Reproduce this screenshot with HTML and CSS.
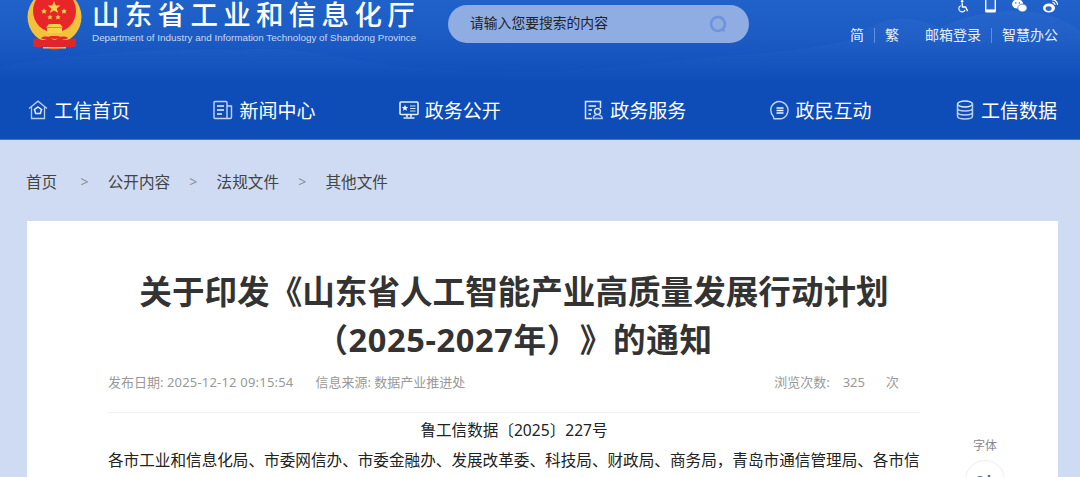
FILE: index.html
```html
<!DOCTYPE html>
<html lang="zh-CN">
<head>
  <meta charset="UTF-8" />
  <title>山东省工业和信息化厅</title>
  <link rel="stylesheet" href="styles.css">
</head>
<body>
  <!-- 页头 -->
  <header class="top">
    <svg class="top-bg" viewBox="0 0 1080 82" preserveAspectRatio="none" aria-hidden="true">
      <defs>
        <linearGradient id="hill" x1="0" y1="0" x2="0" y2="1">
          <stop offset="0" stop-color="#4b86dc" stop-opacity=".16"/>
          <stop offset="1" stop-color="#4b86dc" stop-opacity="0"/>
        </linearGradient>
      </defs>
      <path d="M0 82 L0 66 C90 52 170 48 240 50 C300 44 340 62 420 68 C520 76 600 70 680 60 C740 54 790 54 850 40 C880 20 900 10 940 28 C980 8 1040 2 1080 30 L1080 82 Z" fill="url(#hill)"/>
    </svg>
    <svg class="emblem" viewBox="0 0 56 52" aria-hidden="true">
      <circle cx="27.5" cy="17" r="27" fill="#f3c23c"/>
      <circle cx="27.5" cy="11" r="21.5" fill="#e8262a"/>
      <path d="M27 1 L28.7 5.4 L33.4 5.4 L29.7 8.4 L31.2 13 L27 10.4 L22.8 13 L24.3 8.4 L20.6 5.4 L25.3 5.4 Z" fill="#f8d34a"/>
      <path d="M17 8.5 L17.9 10.3 L19.9 10.5 L18.4 11.8 L18.9 13.8 L17 12.8 L15.1 13.8 L15.6 11.8 L14.1 10.5 L16.1 10.3 Z" fill="#f8d34a"/>
      <path d="M37 8.5 L37.9 10.3 L39.9 10.5 L38.4 11.8 L38.9 13.8 L37 12.8 L35.1 13.8 L35.6 11.8 L34.1 10.5 L36.1 10.3 Z" fill="#f8d34a"/>
      <path d="M23 14.5 L23.8 16.2 L25.6 16.4 L24.3 17.6 L24.7 19.4 L23 18.5 L21.3 19.4 L21.7 17.6 L20.4 16.4 L22.2 16.2 Z" fill="#f8d34a"/>
      <path d="M31 14.5 L31.8 16.2 L33.6 16.4 L32.3 17.6 L32.7 19.4 L31 18.5 L29.3 19.4 L29.7 17.6 L28.4 16.4 L30.2 16.2 Z" fill="#f8d34a"/>
      <path d="M22 24 H33 L36 27.5 H19 Z M20 28 H35 V33 H20 Z" fill="#f8d34a"/>
      <path d="M6 39 C11 37 15 42 20 39 C24 36 25 40 27.5 40 C30 40 31 36 35 39 C40 42 44 37 49 39 L49 46 C43 49 39 46 35 47 C32 48 30 51 27.5 50 C25 51 23 48 20 47 C16 46 12 49 6 46 Z" fill="#e0262a"/>
      <path d="M14 38 C18 35 21 38 24 36 H31 C34 38 37 35 41 38 C37 41 33 37 27.5 39 C22 37 18 41 14 38 Z" fill="#e8262a"/>
      <path d="M16 47 H39 V48.5 H16 Z" fill="#f3c23c"/>
    </svg>
    <div class="brand">
      <div class="brand-name">山东省工业和信息化厅</div>
      <div class="brand-en">Department of Industry and Information Technology of Shandong Province</div>
    </div>
    <div class="search">
      <span class="search-text">请输入您要搜索的内容</span>
      <svg class="search-icon" viewBox="0 0 20 20" aria-hidden="true">
        <circle cx="10" cy="10" r="7" fill="none" stroke="#6d93dd" stroke-width="2.6"/>
        <path d="M14 15 L16.5 17" stroke="#6d93dd" stroke-width="2.4"/>
      </svg>
    </div>
    <div class="tools">
      <div class="tool-icons">
        <svg class="ic-a" viewBox="0 0 14 14" aria-hidden="true">
          <circle cx="6" cy="1" r="1.5" fill="#fff"/>
          <path d="M6 3 L6.4 7.6 H10 L12.4 12.4" fill="none" stroke="#fff" stroke-width="1.6"/>
          <path d="M4.4 6 A3.8 3.8 0 1 0 9.4 11" fill="none" stroke="#fff" stroke-width="1.3"/>
        </svg>
        <svg class="ic-b" viewBox="0 0 11 13" aria-hidden="true">
          <rect x="0" y="-2" width="11" height="14.5" rx="1.6" fill="#fff"/>
          <rect x="1.4" y="-1" width="8.2" height="10.4" fill="#2a68cc"/>
        </svg>
        <svg class="ic-c" viewBox="0 0 15 13" aria-hidden="true">
          <ellipse cx="5.6" cy="4" rx="5.6" ry="4.6" fill="#fff"/>
          <ellipse cx="10.4" cy="8" rx="4.6" ry="3.9" fill="#fff" stroke="#2a68cc" stroke-width=".7"/>
          <circle cx="3.8" cy="3" r=".8" fill="#2a68cc"/>
          <circle cx="7.4" cy="3" r=".8" fill="#2a68cc"/>
        </svg>
        <svg class="ic-c" viewBox="0 0 15 13" aria-hidden="true">
          <ellipse cx="6" cy="8" rx="6" ry="4.6" fill="#fff"/>
          <ellipse cx="5.6" cy="8.6" rx="3" ry="2.3" fill="#2a68cc"/>
          <path d="M9 0 A5 5 0 0 1 14.6 5 M9.5 2.4 A2.4 2.4 0 0 1 12 5" fill="none" stroke="#fff" stroke-width="1.2"/>
        </svg>
      </div>
      <div class="tool-links">
        <span>简</span><i></i><span>繁</span>
        <span class="mail">邮箱登录</span><i></i><span>智慧办公</span>
      </div>
    </div>
  </header>

  <!-- 导航 -->
  <nav class="nav">
    <a class="nav-item">
      <svg viewBox="0 0 20 20" aria-hidden="true">
        <path d="M1 8.5 L10 1.2 L19 8.5 M3.5 7 V18.5 H16.5 V7" fill="none" stroke="#b9cff2" stroke-width="1.3"/>
        <path d="M10 7 L13.6 9.6 L12.3 13.6 H7.7 L6.4 9.6 Z" fill="none" stroke="#e6eefb" stroke-width="1.5"/>
      </svg>
      工信首页
    </a>
    <a class="nav-item">
      <svg viewBox="0 0 20 20" aria-hidden="true">
        <path d="M14 18.5 H2 A1 1 0 0 1 1 17.5 V2.5 A1 1 0 0 1 2 1.5 H13 A1 1 0 0 1 14 2.5 V18.5 H17 A1.5 1.5 0 0 0 18.5 17 V6 H14" fill="none" stroke="#c3d5f4" stroke-width="1.4"/>
        <path d="M4 6 H11 M4 10 H11 M4 14 H9" stroke="#eef3fc" stroke-width="1.4"/>
      </svg>
      新闻中心
    </a>
    <a class="nav-item">
      <svg viewBox="0 0 20 20" aria-hidden="true">
        <rect x="1" y="2" width="18" height="12.5" rx="1" fill="none" stroke="#e6eefb" stroke-width="1.6"/>
        <path d="M6 4.8 L6.9 7 L9.2 7.1 L7.4 8.5 L8 10.8 L6 9.5 L4 10.8 L4.6 8.5 L2.8 7.1 L5.1 7 Z" fill="#fff"/>
        <path d="M11 6 H16.5 M11 8.5 H16.5 M11 11 H16.5" stroke="#d3e0f7" stroke-width="1.1"/>
        <path d="M8 14.5 V17 M12 14.5 V17 M4.5 18 H15.5" stroke="#e6eefb" stroke-width="1.6"/>
      </svg>
      政务公开
    </a>
    <a class="nav-item">
      <svg viewBox="0 0 20 20" aria-hidden="true">
        <path d="M8 18.5 H1.5 V1.5 H16.5 V8" fill="none" stroke="#dce7f9" stroke-width="1.5"/>
        <path d="M4.5 6 H12 M4.5 10 H8 M4.5 14 H7" stroke="#eef3fc" stroke-width="1.4"/>
        <circle cx="13.5" cy="11.5" r="3" fill="none" stroke="#dce7f9" stroke-width="1.4"/>
        <path d="M9 18.5 C9.5 15.5 11 15 12.5 14.6 M18.5 18.5 C18 15.5 16 15 14.5 14.6 M9 18.5 H19" fill="none" stroke="#a9c3ee" stroke-width="1.4"/>
      </svg>
      政务服务
    </a>
    <a class="nav-item">
      <svg viewBox="0 0 20 20" aria-hidden="true">
        <path d="M3.4 16.4 A8.6 8.6 0 1 1 10 18.8 H4 Z" fill="none" stroke="#c3d5f4" stroke-width="1.4"/>
        <path d="M6.5 8 H13.5 M6.5 10.5 H13.5 M6.5 13 H13.5" stroke="#eef3fc" stroke-width="1.3"/>
      </svg>
      政民互动
    </a>
    <a class="nav-item">
      <svg viewBox="0 0 20 20" aria-hidden="true">
        <ellipse cx="10" cy="4" rx="7.5" ry="3" fill="none" stroke="#dce7f9" stroke-width="1.5"/>
        <path d="M2.5 4 V16 C2.5 18 6 19 10 19 S17.5 18 17.5 16 V4 M2.5 8 C2.5 10 6 11 10 11 S17.5 10 17.5 8 M2.5 12 C2.5 14 6 15 10 15 S17.5 14 17.5 12" fill="none" stroke="#b9cff2" stroke-width="1.5"/>
      </svg>
      工信数据
    </a>
  </nav>

  <!-- 面包屑 -->
  <div class="crumbs">
    <a class="crumb-first">首页</a><span class="sep">&gt;</span>
    <a>公开内容</a><span class="sep">&gt;</span>
    <a>法规文件</a><span class="sep">&gt;</span>
    <a>其他文件</a>
  </div>

  <!-- 正文 -->
  <section class="card">
    <article class="article">
      <h1>
        <span class="title-line">关于印发《山东省人工智能产业高质量发展行动计划</span>
        <span class="title-line title-line-2">（2025-2027年）》的通知</span>
      </h1>
      <div class="meta">
        <span>发布日期: <span class="date">2025-12-12 09:15:54</span></span>
        <span class="source">信息来源: 数据产业推进处</span>
        <span class="views">浏览次数:<b>325</b>次</span>
      </div>
      <p class="doc-no">鲁工信数据〔2025〕227号</p>
      <p class="body-text">各市工业和信息化局、市委网信办、市委金融办、发展改革委、科技局、财政局、商务局，青岛市通信管理局、各市信</p>
    </article>
    <aside class="side">
      <div class="side-label">字体</div>
      <div class="side-btn">
        <svg viewBox="0 0 24 12" aria-hidden="true">
          <circle cx="7" cy="7" r="4" fill="#5b6f92"/>
          <path d="M16 2 V12 M11 7 H21" stroke="#5b6f92" stroke-width="2.4"/>
        </svg>
      </div>
    </aside>
  </section>
</body>
</html>
```

FILE: styles.css
```css
html, body {
  margin: 0;
  height: 477px;
  overflow: hidden;
}
body {
  background-color: #cfdbf2;
  font-family: "Noto Sans", "Noto Sans CJK SC", sans-serif;
  color: #333;
  text-spacing-trim: space-all;
}

/* header */
.top {
  position: relative;
  height: 82px;
  display: flex;
  align-items: flex-start;
  padding-left: 27px;
  box-sizing: border-box;
  overflow: hidden;
  background: linear-gradient(180deg, #2062ca 0%, #1b5ac3 50%, #0e4cb8 100%);
}
.top-bg {
  position: absolute;
  left: 0;
  top: 0;
  width: 100%;
  height: 100%;
}
.emblem {
  position: relative;
  width: 56px;
  height: 52px;
  flex: none;
}
.brand {
  position: relative;
  margin-left: 9px;
  width: 330px;
  color: #fff;
}
.brand-name {
  font-family: "Liberation Sans", "Noto Sans CJK SC", sans-serif;
  font-size: 27.5px;
  line-height: 32px;
  font-weight: 500;
  letter-spacing: 5.3px;
  white-space: nowrap;
}
.brand-en {
  font-family: "Liberation Sans", sans-serif;
  font-size: 9.9px;
  line-height: 12px;
  color: #c9d9f3;
  white-space: nowrap;
}
.search {
  position: relative;
  width: 301px;
  height: 38px;
  margin: 5px 0 0 26px;
  padding: 0 22px;
  box-sizing: border-box;
  display: flex;
  align-items: center;
  justify-content: space-between;
  border-radius: 19px;
  background-color: #8fade2;
}
.search-text {
  font-size: 13.8px;
  line-height: 20px;
  margin-bottom: 3px;
  color: #222;
}
.search-icon {
  width: 20px;
  height: 20px;
  margin-right: -1px;
}
.tools {
  position: relative;
  margin-left: auto;
  width: 240px;
  padding-right: 22px;
  box-sizing: border-box;
  color: #fff;
}
.tool-icons {
  height: 13px;
  display: flex;
  justify-content: flex-end;
  gap: 16px;
}
.tool-icons svg {
  height: 13px;
}
.ic-a {
  width: 12px;
}
.ic-b {
  width: 11px;
}
.ic-c {
  width: 15px;
}
.tool-links {
  margin-top: 12px;
  display: flex;
  justify-content: flex-end;
  align-items: center;
  font-size: 14px;
  line-height: 20px;
  white-space: nowrap;
  color: #e9f0fc;
}
.tool-links i {
  flex: none;
  width: 1px;
  height: 15px;
  margin: 0 10px;
  background-color: #5f90dc;
}
.mail {
  margin-left: 26px;
}

/* nav */
.nav {
  height: 58px;
  padding: 0 23px 2px 28px;
  box-sizing: border-box;
  display: flex;
  justify-content: space-between;
  align-items: center;
  background-color: #0e4cb8;
  border-bottom: 1px solid #3f74cc;
}
.nav-item {
  display: flex;
  align-items: center;
  gap: 6px;
  font-size: 19px;
  color: #fff;
}
.nav-item svg {
  width: 20px;
  height: 20px;
}

/* breadcrumb */
.crumbs {
  height: 81px;
  padding: 2px 0 0 26px;
  box-sizing: border-box;
  display: flex;
  align-items: center;
  font-size: 15.6px;
  color: #444;
}
.crumb-first {
  margin-right: 4px;
}
.sep {
  width: 46.5px;
  text-align: center;
  font-size: 14px;
  color: #8a8f98;
}

/* card */
.card {
  margin: 0 22px 0 27px;
  height: 300px;
  background-color: #fff;
  display: flex;
  padding: 47px 0 0 81px;
  box-sizing: border-box;
}
.article {
  width: 812px;
  flex: none;
}
h1 {
  margin: 0;
  font-size: 32.6px;
  line-height: 48px;
  font-weight: 700;
  text-align: center;
  color: #333;
}
.title-line {
  display: block;
}
.title-line-2 {
  letter-spacing: .6px;
}
.meta {
  display: flex;
  align-items: center;
  height: 20px;
  margin-top: 7px;
  padding-bottom: 21px;
  border-bottom: 1px solid #f1f1f1;
  font-size: 13px;
  color: #999;
}
.date {
  letter-spacing: .2px;
}
.source {
  margin-left: 22px;
}
.views {
  margin-left: auto;
  margin-right: 21px;
}
.views b {
  font-weight: 400;
  margin: 0 21px 0 13px;
}
.doc-no {
  margin: 6px 0 0;
  font-size: 15.6px;
  line-height: 22px;
  text-align: center;
  color: #222;
}
.body-text {
  margin: 4px 0 0;
  font-size: 15.62px;
  line-height: 30px;
  color: #222;
  white-space: nowrap;
}
.side {
  margin-left: 44px;
  padding-top: 170px;
  width: 42px;
  text-align: center;
}
.side-label {
  font-size: 12px;
  line-height: 16px;
  color: #888;
}
.side-btn {
  width: 40px;
  height: 40px;
  margin: 6px auto 0;
  box-sizing: border-box;
  border: 1px solid #eee;
  border-radius: 50%;
  padding: 12px 7px 0;
}
.side-btn svg {
  display: block;
  width: 24px;
  height: 12px;
}
```
